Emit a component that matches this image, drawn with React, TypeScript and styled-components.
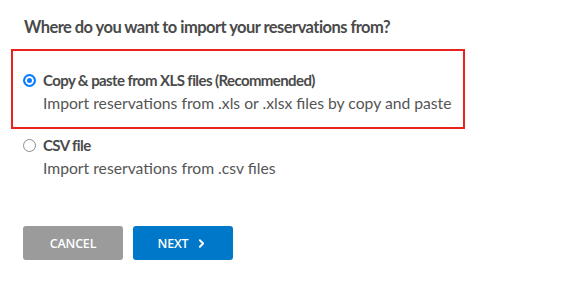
import { ChevronRight } from 'lucide-react';
import styled, { createGlobalStyle } from 'styled-components';

const GlobalStyle = createGlobalStyle`
  body {
    margin: 0;
    background: #ffffff;
    font-family: Lato, "Open Sans", sans-serif;
  }
`;

const Page = styled.div`
  width: 582px;
  height: 291px;
  padding: 15px 0 0 11px;
  box-sizing: border-box;
`;

const Heading = styled.h2`
  margin: 0 0 10px 13px;
  font-size: 16.5px;
  line-height: 24px;
  font-weight: 700;
  letter-spacing: -0.55px;
  color: #4a4a4a;
`;

const OptionsList = styled.div`
  display: flex;
  flex-direction: column;
  width: 454px;
`;

const Option = styled.label<{ $highlighted?: boolean }>`
  display: grid;
  grid-template-columns: 13px 1fr;
  column-gap: 7px;
  padding: ${(p) => (p.$highlighted ? '19px 10px 14px' : '4px 10px 0')};
  border: 2px solid ${(p) => (p.$highlighted ? '#e8231e' : 'transparent')};
  cursor: pointer;
`;

const Radio = styled.span<{ $checked?: boolean }>`
  width: 13px;
  height: 13px;
  margin-top: 4px;
  box-sizing: border-box;
  border-radius: 50%;
  border: 1px solid ${(p) => (p.$checked ? '#0a7cff' : '#8d8d8d')};
  background: ${(p) => (p.$checked ? '#0a7cff' : '#ffffff')};
  box-shadow: ${(p) => (p.$checked ? 'inset 0 0 0 2px #ffffff' : 'none')};
  ${(p) => (p.$checked ? 'border-width: 2px;' : '')}
`;

const Title = styled.div`
  font-size: 15px;
  line-height: 20px;
  font-weight: 700;
  letter-spacing: -0.6px;
  color: #4a4a4a;
`;

const Description = styled.div`
  grid-column: 2;
  margin-top: 3px;
  font-size: 15.7px;
  line-height: 20px;
  color: #555555;
`;

const Actions = styled.div`
  display: flex;
  gap: 10px;
  margin: 46px 0 0 12px;
`;

const Button = styled.button<{ $primary?: boolean }>`
  display: flex;
  align-items: center;
  justify-content: center;
  gap: 7px;
  width: 100px;
  height: 34px;
  padding: 0;
  border: none;
  border-radius: 3px;
  background: ${(p) => (p.$primary ? '#0078c9' : '#9b9b9b')};
  color: #ffffff;
  font-family: "Open Sans", sans-serif;
  font-size: 12.5px;
  font-weight: 600;
  letter-spacing: -0.2px;
  text-transform: uppercase;
  cursor: pointer;
`;

const options = [
  {
    id: 'xls',
    title: 'Copy & paste from XLS files (Recommended)',
    description: 'Import reservations from .xls or .xlsx files by copy and paste',
  },
  {
    id: 'csv',
    title: 'CSV file',
    description: 'Import reservations from .csv files',
  },
];

const App = () => {
  const selected = 'xls';

  return (
    <>
      <GlobalStyle />
      <Page>
        <Heading>Where do you want to import your reservations from?</Heading>
        <OptionsList>
          {options.map(({ id, title, description }) => (
            <Option key={id} $highlighted={id === selected}>
              <Radio $checked={id === selected} />
              <Title>{title}</Title>
              <Description>{description}</Description>
            </Option>
          ))}
        </OptionsList>
        <Actions>
          <Button>Cancel</Button>
          <Button $primary>
            Next
            <ChevronRight size={13} strokeWidth={3.5} />
          </Button>
        </Actions>
      </Page>
    </>
  );
};

export default App;
